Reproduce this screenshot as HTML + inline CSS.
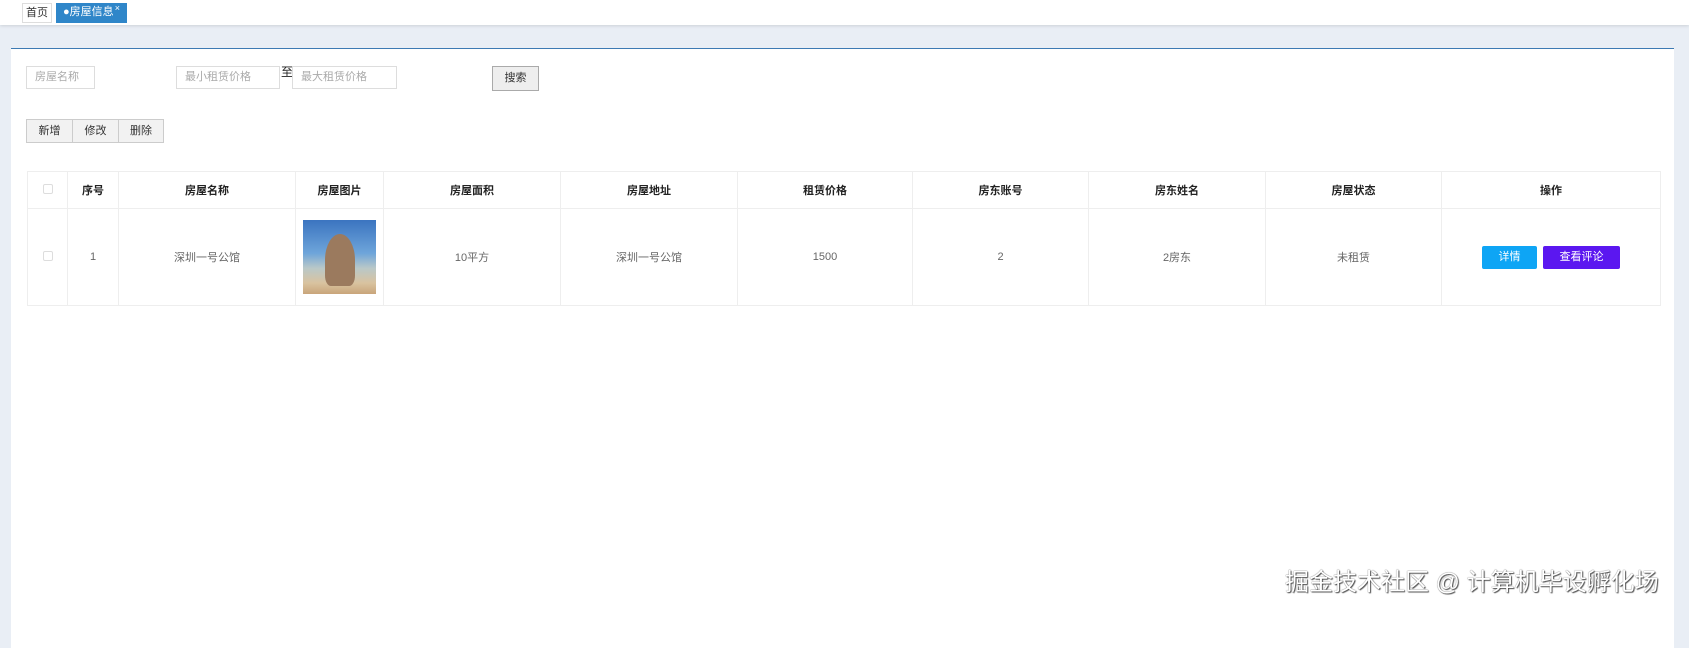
<!DOCTYPE html>
<html><head><meta charset="utf-8"><style>
*{box-sizing:border-box;margin:0;padding:0}
body{width:1689px;height:611px;background:#e9eef5;font-family:"Liberation Sans","Noto Sans CJK SC",sans-serif;font-size:12px;color:#333;position:relative;overflow:hidden}
.top{position:absolute;left:0;top:0;width:1689px;height:25px;background:#fff;box-shadow:0 1px 3px rgba(0,0,0,.12)}
.tab{position:absolute;top:3px;height:20px;line-height:19px;font-size:11px}
.t1{left:22px;width:30px;border:1px solid #ddd;text-align:center;color:#333}
.t2{left:56px;width:71px;background:#2f86c9;color:#fff;padding-left:7px}
.t2 sup{position:absolute;right:7px;top:-4px;font-size:9px}
.panel{position:absolute;left:11px;top:48px;width:1663px;height:600px;background:#fff;border-top:1px solid #3d7ab3}
.in{position:absolute;height:23px;border:1px solid #ddd;color:#aaa;font-size:11px;line-height:21px;padding-left:8px}
.btn{position:absolute;border:1px solid #ccc;background:#f2f2f2;text-align:center;font-size:11px}
table{position:absolute;left:16px;top:122px;width:1634px;border-collapse:collapse;table-layout:fixed}
td,th{border:1px solid #eee;text-align:center;font-size:11px}
th{height:37px;font-weight:bold;color:#222}
td{height:97px;color:#666}
.cb{display:inline-block;width:10px;height:10px;border:1px solid #ddd;border-radius:2px}
.b{display:inline-block;height:23px;line-height:23px;color:#fff;border-radius:2px;vertical-align:middle}
.wm{position:absolute;left:1285px;top:562px;font-size:24px;color:#fff;text-shadow:0 0 1px #333,1px 1px 1px #555}
</style></head><body>
<div class="top"></div>
<div class="tab t1">首页</div>
<div class="tab t2">●房屋信息<sup>×</sup></div>
<div class="panel">
<div class="in" style="left:15px;top:17px;width:69px">房屋名称</div>
<div class="in" style="left:165px;top:17px;width:104px">最小租赁价格</div>
<div style="position:absolute;left:270px;top:14px;font-size:12px;color:#222">至</div>
<div class="in" style="left:281px;top:17px;width:105px">最大租赁价格</div>
<div class="btn" style="left:481px;top:17px;width:47px;height:25px;line-height:23px;border-color:#aaa;background:#eee">搜索</div>
<div class="btn" style="left:15px;top:70px;width:47px;height:24px;line-height:22px">新增</div>
<div class="btn" style="left:61px;top:70px;width:47px;height:24px;line-height:22px">修改</div>
<div class="btn" style="left:107px;top:70px;width:46px;height:24px;line-height:22px">删除</div>
<table>
<colgroup><col style="width:40px"><col style="width:51px"><col style="width:177px"><col style="width:88px"><col style="width:177px"><col style="width:177px"><col style="width:175px"><col style="width:176px"><col style="width:177px"><col style="width:176px"><col></colgroup>
<tr><th><span class="cb"></span></th><th>序号</th><th>房屋名称</th><th>房屋图片</th><th>房屋面积</th><th>房屋地址</th><th>租赁价格</th><th>房东账号</th><th>房东姓名</th><th>房屋状态</th><th>操作</th></tr>
<tr><td><span class="cb"></span></td><td>1</td><td>深圳一号公馆</td><td><div style="width:73px;height:74px;margin:0 auto;background:linear-gradient(180deg,#3b74c0 0%,#6ea5da 45%,#b9c8c8 65%,#d9c3a0 85%,#c9a57a 100%);position:relative"><div style="position:absolute;left:22px;top:14px;width:30px;height:52px;background:#9b7a5e;border-radius:50% 50% 20% 20%"></div></div></td><td>10平方</td><td>深圳一号公馆</td><td>1500</td><td>2</td><td>2房东</td><td>未租赁</td><td><span class="b" style="width:55px;background:#0ea5f5">详情</span> <span class="b" style="width:77px;background:#5b17f0;margin-left:3px">查看评论</span></td></tr>
</table>
</div>
<div class="wm">掘金技术社区 @ 计算机毕设孵化场</div>
</body></html>
